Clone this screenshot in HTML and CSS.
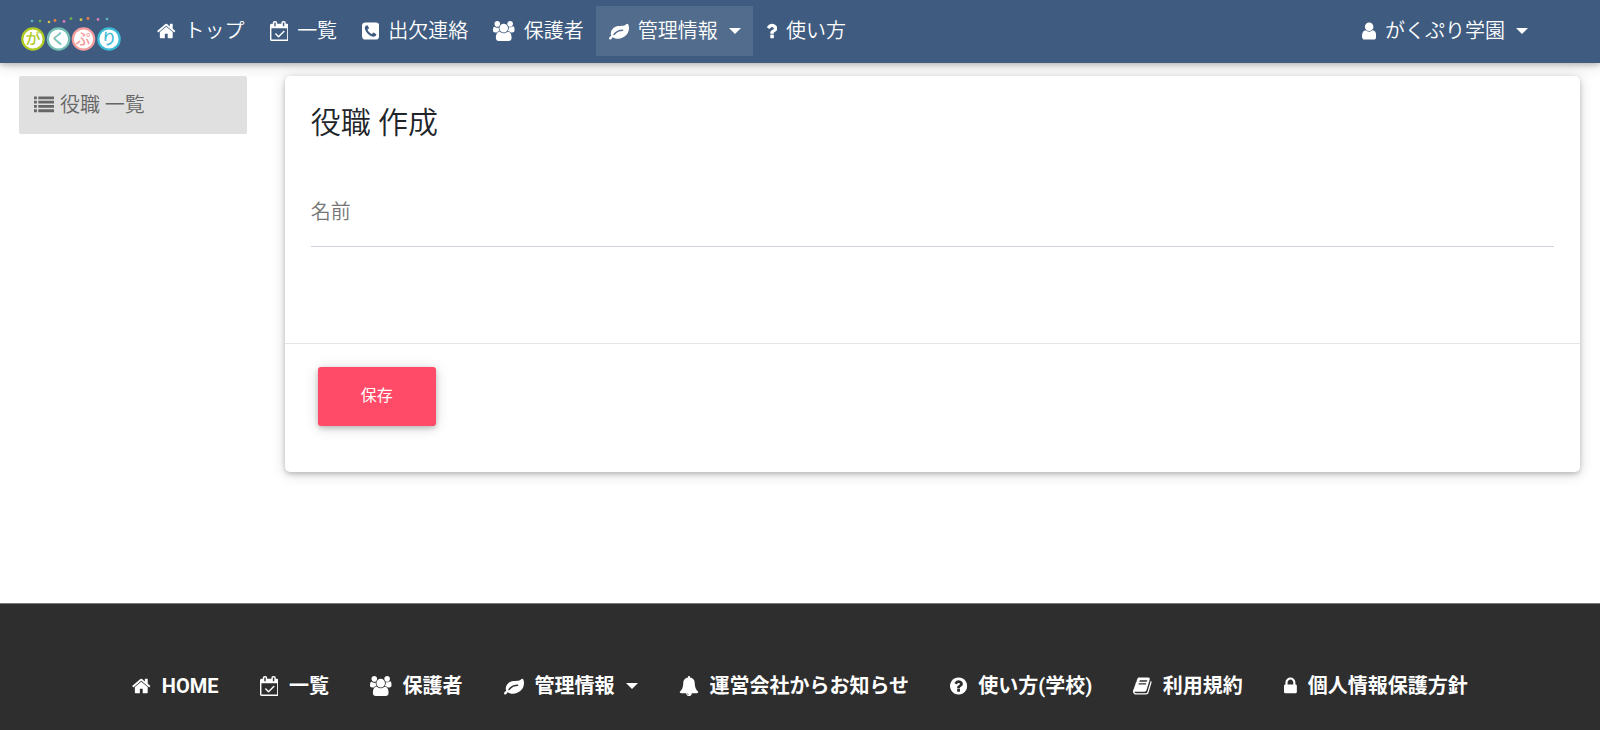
FILE: index.html
```html
<!DOCTYPE html>
<html lang="ja">
<head>
    <meta charset="UTF-8">
    <meta name="viewport" content="width=device-width, initial-scale=1.0">
    <title>役職 作成</title>
    <link rel="stylesheet" href="styles.css">
</head>
<body>
    <!-- icon shapes -->
    <svg class="sprite" aria-hidden="true">
        <defs>
            <path id="home" d="M1472 992v480q0 26-19 45t-45 19h-384v-384h-256v384h-384q-26 0-45-19t-19-45v-480q0-1 .5-3t.5-3l575-474 575 474q1 2 1 6zm223-69l-62 74q-8 9-21 11h-3q-13 0-21-7l-692-577-692 577q-12 8-24 7-13-2-21-11l-62-74q-8-10-7-23.5t11-21.5l719-599q32-26 76-26t76 26l244 204v-195q0-14 9-23t23-9h192q14 0 23 9t9 23v408l219 182q10 8 11 21.5t-7 23.5z"/>
            <path id="calendar" d="M1303 964l-512 512q-10 9-23 9t-23-9l-288-288q-9-10-9-23t9-22l46-46q9-9 22-9t23 9l220 220 444-444q10-9 23-9t22 9l46 46q9 9 9 22t-9 23zm-1175 700h1408v-1024h-1408v1024zm384-1216v-288q0-14-9-23t-23-9h-64q-14 0-23 9t-9 23v288q0 14 9 23t23 9h64q14 0 23-9t9-23zm768 0v-288q0-14-9-23t-23-9h-64q-14 0-23 9t-9 23v288q0 14 9 23t23 9h64q14 0 23-9t9-23zm384-64v1280q0 52-38 90t-90 38h-1408q-52 0-90-38t-38-90v-1280q0-52 38-90t90-38h128v-96q0-66 47-113t113-47h64q66 0 113 47t47 113v96h384v-96q0-66 47-113t113-47h64q66 0 113 47t47 113v96h128q52 0 90 38t38 90z"/>
            <path id="phone" d="M1408 1193q0-11-2-16t-18-16.5-40.5-25-47.5-26.5-45.5-25-28.5-15q-5-3-19-13t-25-15-21-5q-15 0-36.5 20.5t-39.5 45-38.5 45-33.5 20.5q-7 0-16.5-3.5t-15.5-6.5-17-9.5-14-8.5q-99-55-170-126.5t-127-170.5q-2-3-8.5-14t-9.5-17-6.5-15.5-3.5-16.5q0-13 20.5-33.5t45-38.5 45-39.5 20.5-36.5q0-10-5-21t-15-25-13-19q-3-6-15-28.5t-25-45.5-26.5-47.5-25-40.5-16.5-18-16-2q-48 0-101 22-46 21-80 94.5t-34 130.5q0 16 2.5 34t5 30.5 9 33 10 29.5 12.5 33 11 30q60 164 216.5 320.5t320.5 216.5q6 2 30 11t33 12.5 29.5 10 33 9 30.5 5 34 2.5q57 0 130.5-34t94.5-80q22-53 22-101zm256-777v960q0 119-84.5 203.5t-203.5 84.5h-960q-119 0-203.5-84.5t-84.5-203.5v-960q0-119 84.5-203.5t203.5-84.5h960q119 0 203.5 84.5t84.5 203.5z"/>
            <path id="users" d="M593 896q-162 5-265 128h-134q-82 0-138-40.5t-56-118.5q0-353 124-353 6 0 43.5 21t97.5 42.5 119 21.5q67 0 133-23-5 37-5 66 0 159 91 291zm1071 637q0 120-73 189.5t-194 69.5h-874q-121 0-194-69.5t-73-189.5q0-53 3.5-103.5t14-109 26.5-108.5 43-97.5 62-81 85.5-53.5 111.5-20q10 0 43 21.5t73 48 107 48 135 21.5 135-21.5 107-48 73-48 43-21.5q61 0 111.5 20t85.5 53.5 62 81 43 97.5 26.5 108.5 14 109 3.5 103.5zm-1024-1277q0 106-75 181t-181 75-181-75-75-181 75-181 181-75 181 75 75 181zm704 384q0 159-112.5 271.5t-271.5 112.5-271.5-112.5-112.5-271.5 112.5-271.5 271.5-112.5 271.5 112.5 112.5 271.5zm576 225q0 78-56 118.5t-138 40.5h-134q-103-123-265-128 90-132 90-291 0-29-5-66 66 23 133 23 59 0 119-21.5t97.5-42.5 43.5-21q124 0 124 353zm-128-609q0 106-75 181t-181 75-181-75-75-181 75-181 181-75 181 75 75 181z"/>
            <path id="leaf" d="M1280 832q0-26-19-45t-45-19q-172 0-318 49.5t-259.5 134-235.5 219.5q-19 21-19 45 0 26 19 45t45 19q24 0 45-19 27-24 74-71t67-66q137-124 268.5-176t313.5-52q26 0 45-19t19-45zm512-198q0 95-20 193-46 224-184.5 383t-357.5 268q-214 108-438 108-148 0-286-47-15-5-88-42t-96-37q-16 0-39.5 32t-45 70-52.5 70-60 32q-43 0-63.5-17.5t-45.5-59.5q-2-4-6-11t-5.5-10-3-9.5-1.5-13.5q0-35 31-73.5t68-65.5 68-56 31-48q0-4-14-38t-16-44q-9-51-9-104 0-115 43.5-220t119-184.5 170.5-139 204-95.5q55-18 145-25.5t179.5-9 178.5-6 163.5-24 113.5-56.5l29.5-29.5 29.5-28 27-20 36.5-16 43.5-4.5q39 0 70.5 46t47.5 112 24 124 8 96z"/>
            <path id="question" d="M1088 1256v240q0 16-12 28t-28 12h-240q-16 0-28-12t-12-28v-240q0-16 12-28t28-12h240q16 0 28 12t12 28zm316-600q0 54-15.5 101t-35 76.5-55 59.5-57.5 43.5-61 35.5q-41 23-68.5 65t-27.5 67q0 17-12 32.5t-28 15.5h-240q-15 0-25.5-18.5t-10.5-37.5v-45q0-83 65-156.5t143-108.5q59-27 84-56t25-76q0-42-46.5-74t-107.5-32q-65 0-108 29-35 25-107 115-13 16-31 16-12 0-25-8l-164-125q-13-10-15.5-25t5.5-28q160-266 464-266 80 0 161 31t146 83 106 127.5 41 158.5z"/>
            <path id="user" d="M1536 1399q0 109-62.5 187t-150.5 78h-854q-88 0-150.5-78t-62.5-187q0-85 8.5-160.5t31.5-152 58.5-131 94-89 134.5-34.5q131 128 313 128t313-128q76 0 134.5 34.5t94 89 58.5 131 31.5 152 8.5 160.5zm-256-887q0 159-112.5 271.5t-271.5 112.5-271.5-112.5-112.5-271.5 112.5-271.5 271.5-112.5 271.5 112.5 112.5 271.5z"/>
            <path id="list" d="M0 1280h256v256h-256zM0 896h256v256h-256zM0 512h256v256h-256zM0 128h256v256h-256zM384 1280h1408v256h-1408zM384 896h1408v256h-1408zM384 512h1408v256h-1408zM384 128h1408v256h-1408z"/>
            <path id="bell" d="M912 1696q0-16-16-16-59 0-101.5-42.5t-42.5-101.5q0-16-16-16t-16 16q0 73 51.5 124.5t124.5 51.5q16 0 16-16zm816-288q0 52-38 90t-90 38h-448q0 106-75 181t-181 75-181-75-75-181h-448q-52 0-90-38t-38-90q50-42 91-88t85-119.5 74.5-158.5 50-206 19.5-260q0-152 117-282.5t307-158.5q-8-19-8-39 0-40 28-68t68-28 68 28 28 68q0 20-8 39 190 28 307 158.5t117 282.5q0 139 19.5 260t50 206 74.5 158.5 85 119.5 91 88z"/>
            <path id="question-circle" d="M1024 1376v-192q0-14-9-23t-23-9h-192q-14 0-23 9t-9 23v192q0 14 9 23t23 9h192q14 0 23-9t9-23zm256-672q0-88-55.5-163t-138.5-116-170-41q-243 0-371 213-15 24 8 42l132 100q7 6 19 6 16 0 25-12 53-68 86-92 34-24 86-24 48 0 85.5 26t37.5 59q0 38-20 61t-68 45q-63 28-115.5 86.5t-52.5 125.5v36q0 14 9 23t23 9h192q14 0 23-9t9-23q0-19 21.5-49.5t54.5-49.5q32-18 49-28.5t46-35 44.5-48 28-60.5 12.5-81zm384 192q0 209-103 385.5t-279.5 279.5-385.5 103-385.5-103-279.5-279.5-103-385.5 103-385.5 279.5-279.5 385.5-103 385.5 103 279.5 279.5 103 385.5z"/>
            <path id="book" d="M1703 478q40 57 18 129l-275 906q-19 64-76.5 107.5t-122.5 43.5h-923q-77 0-148.5-53.5t-99.5-131.5q-24-67-2-127 0-4 3-27t4-37q1-8-3-21.5t-3-19.5q2-11 8-21t16.5-23.5 16.5-23.5q23-38 45-91.5t30-91.5q3-10 .5-30t-.5-28q3-11 17-28t17-23q21-36 42-92t25-90q1-9-2.5-32t.5-28q4-13 22-30.5t22-22.5q19-26 42.5-84.5t27.5-96.5q1-8-3-25.5t-2-26.5q2-8 9-18t18-23 17-21q8-12 16.5-30.5t15-35 16-36 19.5-32 26.5-23.5 36-11.5 47.5 5.5l-1 3q38-9 51-9h761q74 0 114 56t18 130l-274 906q-36 119-71.5 153.5t-128.5 34.5h-869q-27 0-38 15-11 16-1 43 24 70 144 70h923q29 0 56-15.5t35-41.5l300-987q7-22 5-57 38 15 59 43zm-1064 2q-4 13 2 22.5t20 9.5h608q13 0 25.5-9.5t16.5-22.5l21-64q4-13-2-22.5t-20-9.5h-608q-13 0-25.5 9.5t-16.5 22.5zm-83 256q-4 13 2 22.5t20 9.5h608q13 0 25.5-9.5t16.5-22.5l21-64q4-13-2-22.5t-20-9.5h-608q-13 0-25.5 9.5t-16.5 22.5z"/>
            <path id="lock" d="M640 768h512v-192q0-106-75-181t-181-75-181 75-75 181v192zm832 96v576q0 40-28 68t-68 28h-960q-40 0-68-28t-28-68v-576q0-40 28-68t68-28h32v-192q0-184 132-316t316-132 316 132 132 316v192h32q40 0 68 28t28 68z"/>
        </defs>
    </svg>

    <nav class="navbar">
        <a class="brand" href="#" aria-label="がくぷり">
            <svg class="logo" viewBox="0 0 100 36">
                <g>
                    <circle cx="11" cy="4" r="1.3" fill="#5bb8b5"/>
                    <circle cx="19" cy="4" r="1.3" fill="#6fb24c"/>
                    <circle cx="28" cy="5" r="1.3" fill="#d8c84a"/>
                    <circle cx="34" cy="3.5" r="1.4" fill="#ef8045"/>
                    <circle cx="43" cy="4.5" r="1.4" fill="#d67cb8"/>
                    <circle cx="50" cy="1.7" r="1.4" fill="#6fb24c"/>
                    <circle cx="60" cy="2.7" r="1.4" fill="#d8c84a"/>
                    <circle cx="67" cy="1.5" r="1.4" fill="#ef8045"/>
                    <circle cx="77" cy="2.5" r="1.4" fill="#d67cb8"/>
                    <circle cx="86" cy="2" r="1.3" fill="#5bb8b5"/>
                </g>
                <g fill="#fff" stroke-width="2.2">
                    <circle cx="12" cy="22" r="10.7" stroke="#b0cb1f"/>
                    <circle cx="37.5" cy="22" r="10.7" stroke="#74beb2"/>
                    <circle cx="62.5" cy="22" r="10.7" stroke="#f49c9c"/>
                    <circle cx="88" cy="22" r="10.7" stroke="#3dbbd6"/>
                </g>
                <g class="logo-text">
                    <text x="12" y="27" fill="#b0cb1f">が</text>
                    <text x="37" y="27" fill="#74beb2">く</text>
                    <text x="62" y="27" fill="#f49c9c">ぷ</text>
                    <text x="88" y="27" fill="#3dbbd6">り</text>
                </g>
            </svg>
        </a>
        <a class="nav-link" href="#"><svg class="icon" viewBox="64 0 1664 1792"><use href="#home"/></svg>トップ</a>
        <a class="nav-link" href="#"><svg class="icon" viewBox="0 0 1664 1792"><use href="#calendar"/></svg>一覧</a>
        <a class="nav-link" href="#"><svg class="icon" viewBox="128 0 1536 1792"><use href="#phone"/></svg>出欠連絡</a>
        <a class="nav-link" href="#"><svg class="icon" viewBox="0 0 1920 1792"><use href="#users"/></svg>保護者</a>
        <button class="nav-link dropdown active" type="button"><svg class="icon" viewBox="0 0 1792 1792"><use href="#leaf"/></svg>管理情報</button>
        <a class="nav-link" href="#"><svg class="icon" viewBox="384 0 1024 1792"><use href="#question"/></svg>使い方</a>
        <button class="nav-link dropdown account" type="button"><svg class="icon" viewBox="256 0 1280 1792"><use href="#user"/></svg>がくぷり学園</button>
    </nav>

    <div class="layout">
        <aside class="sidebar">
            <a class="side-link" href="#"><svg class="icon" viewBox="0 0 1792 1792"><use href="#list"/></svg>役職 一覧</a>
        </aside>
        <main class="content">
            <form class="card">
                <div class="card-body">
                    <h1 class="card-title">役職 作成</h1>
                    <div class="field">
                        <input type="text" id="name" placeholder=" ">
                        <label for="name">名前</label>
                    </div>
                </div>
                <div class="card-actions">
                    <button class="btn-save" type="submit">保存</button>
                </div>
            </form>
        </main>
    </div>

    <footer class="footer">
        <a class="footer-link" href="#"><svg class="icon" viewBox="64 0 1664 1792"><use href="#home"/></svg>HOME</a>
        <a class="footer-link" href="#"><svg class="icon" viewBox="0 0 1664 1792"><use href="#calendar"/></svg>一覧</a>
        <a class="footer-link" href="#"><svg class="icon" viewBox="0 0 1920 1792"><use href="#users"/></svg>保護者</a>
        <button class="footer-link dropdown" type="button"><svg class="icon" viewBox="0 0 1792 1792"><use href="#leaf"/></svg>管理情報</button>
        <a class="footer-link" href="#"><svg class="icon" viewBox="0 0 1792 1792"><use href="#bell"/></svg>運営会社からお知らせ</a>
        <a class="footer-link" href="#"><svg class="icon" viewBox="128 0 1536 1792"><use href="#question-circle"/></svg>使い方(学校)</a>
        <a class="footer-link" href="#"><svg class="icon" viewBox="64 0 1664 1792"><use href="#book"/></svg>利用規約</a>
        <a class="footer-link" href="#"><svg class="icon" viewBox="320 0 1152 1792"><use href="#lock"/></svg>個人情報保護方針</a>
    </footer>
</body>
</html>
```

FILE: styles.css
```css
* {
    box-sizing: border-box;
}
body {
    margin: 0;
    min-height: 100vh;
    display: flex;
    flex-direction: column;
    background: #fff;
    color: #212529;
    font-family: Roboto, "Noto Sans CJK JP", sans-serif;
    font-size: 20px;
    font-weight: 350;
    line-height: 30px;
}
a {
    color: inherit;
    text-decoration: none;
}
button,
input {
    font: inherit;
    color: inherit;
    border: none;
    background: none;
}
button {
    cursor: pointer;
}
.sprite {
    display: none;
}
.icon {
    height: 20px;
    fill: currentColor;
    flex: none;
}

/* top bar */
.navbar {
    display: flex;
    align-items: center;
    padding: 6px 20px 7px;
    background: #3f5c80;
    color: #fff;
    box-shadow: 0 2px 5px rgba(0, 0, 0, 0.2), 0 2px 14px rgba(0, 0, 0, 0.16);
}
.brand {
    margin-right: 23px;
    padding: 7px 0 0 1px;
}
.logo {
    display: block;
    width: 100px;
    height: 36px;
}
.logo-text {
    font-size: 15px;
    font-weight: 500;
    text-anchor: middle;
}
.nav-link {
    display: flex;
    align-items: center;
    gap: 9px;
    padding: 10px 12px 10px 13px;
    white-space: nowrap;
}
.nav-link.active {
    background: rgba(255, 255, 255, 0.1);
}
.account {
    margin-left: auto;
    margin-right: 40px;
}
.dropdown::after {
    content: "";
    margin-left: 2px;
    border-top: 6px solid;
    border-left: 6px solid transparent;
    border-right: 6px solid transparent;
}

/* page */
.layout {
    display: grid;
    grid-template-columns: 1fr 5fr;
    margin: 13px 0 131px;
}
.sidebar {
    padding: 0 20px 0 19px;
}
.content {
    padding: 0 20px 0 18px;
}
.side-link {
    display: flex;
    align-items: center;
    gap: 6px;
    padding: 14px 15px;
    background: #e0e0e0;
    color: #666;
    border-radius: 2px;
}
.card {
    border-radius: 5px;
    background: #fff;
    box-shadow: 0 2px 5px rgba(0, 0, 0, 0.2), 0 2px 14px rgba(0, 0, 0, 0.16);
}
.card-body {
    padding: 26px 26px 96px;
}
.card-title {
    margin: 0 0 44px;
    font-size: 30px;
    font-weight: 350;
    line-height: 42px;
}
.field {
    position: relative;
}
.field input {
    display: block;
    width: 100%;
    height: 59px;
    padding: 0;
    border-bottom: 1px solid #ced4da;
    outline: none;
}
/* label lies over the empty input */
.field label {
    position: absolute;
    top: 9px;
    left: 0;
    color: #757575;
}
.field input:focus + label,
.field input:not(:placeholder-shown) + label {
    top: -16px;
    font-size: 16px;
}
.card-actions {
    padding: 23px 33px 46px;
    border-top: 1px solid #e5e5e5;
}
.btn-save {
    display: block;
    padding: 14px 43px 15px;
    border-radius: 3px;
    background: #ff4a68;
    color: #fff;
    font-size: 16px;
    font-weight: 400;
    box-shadow: 0 2px 5px rgba(0, 0, 0, 0.2), 0 2px 14px rgba(0, 0, 0, 0.16);
}

/* footer */
.footer {
    flex-grow: 1;
    display: flex;
    flex-wrap: wrap;
    justify-content: center;
    align-items: flex-start;
    gap: 10px 41px;
    padding: 67px 20px 29px;
    border-top: 1px solid #777;
    background: #2e2e2e;
    color: #fff;
    font-weight: 700;
}
.footer-link {
    display: flex;
    align-items: center;
    gap: 11px;
    padding: 0;
    white-space: nowrap;
}
.footer .dropdown::after {
    margin-left: 0;
}
```
